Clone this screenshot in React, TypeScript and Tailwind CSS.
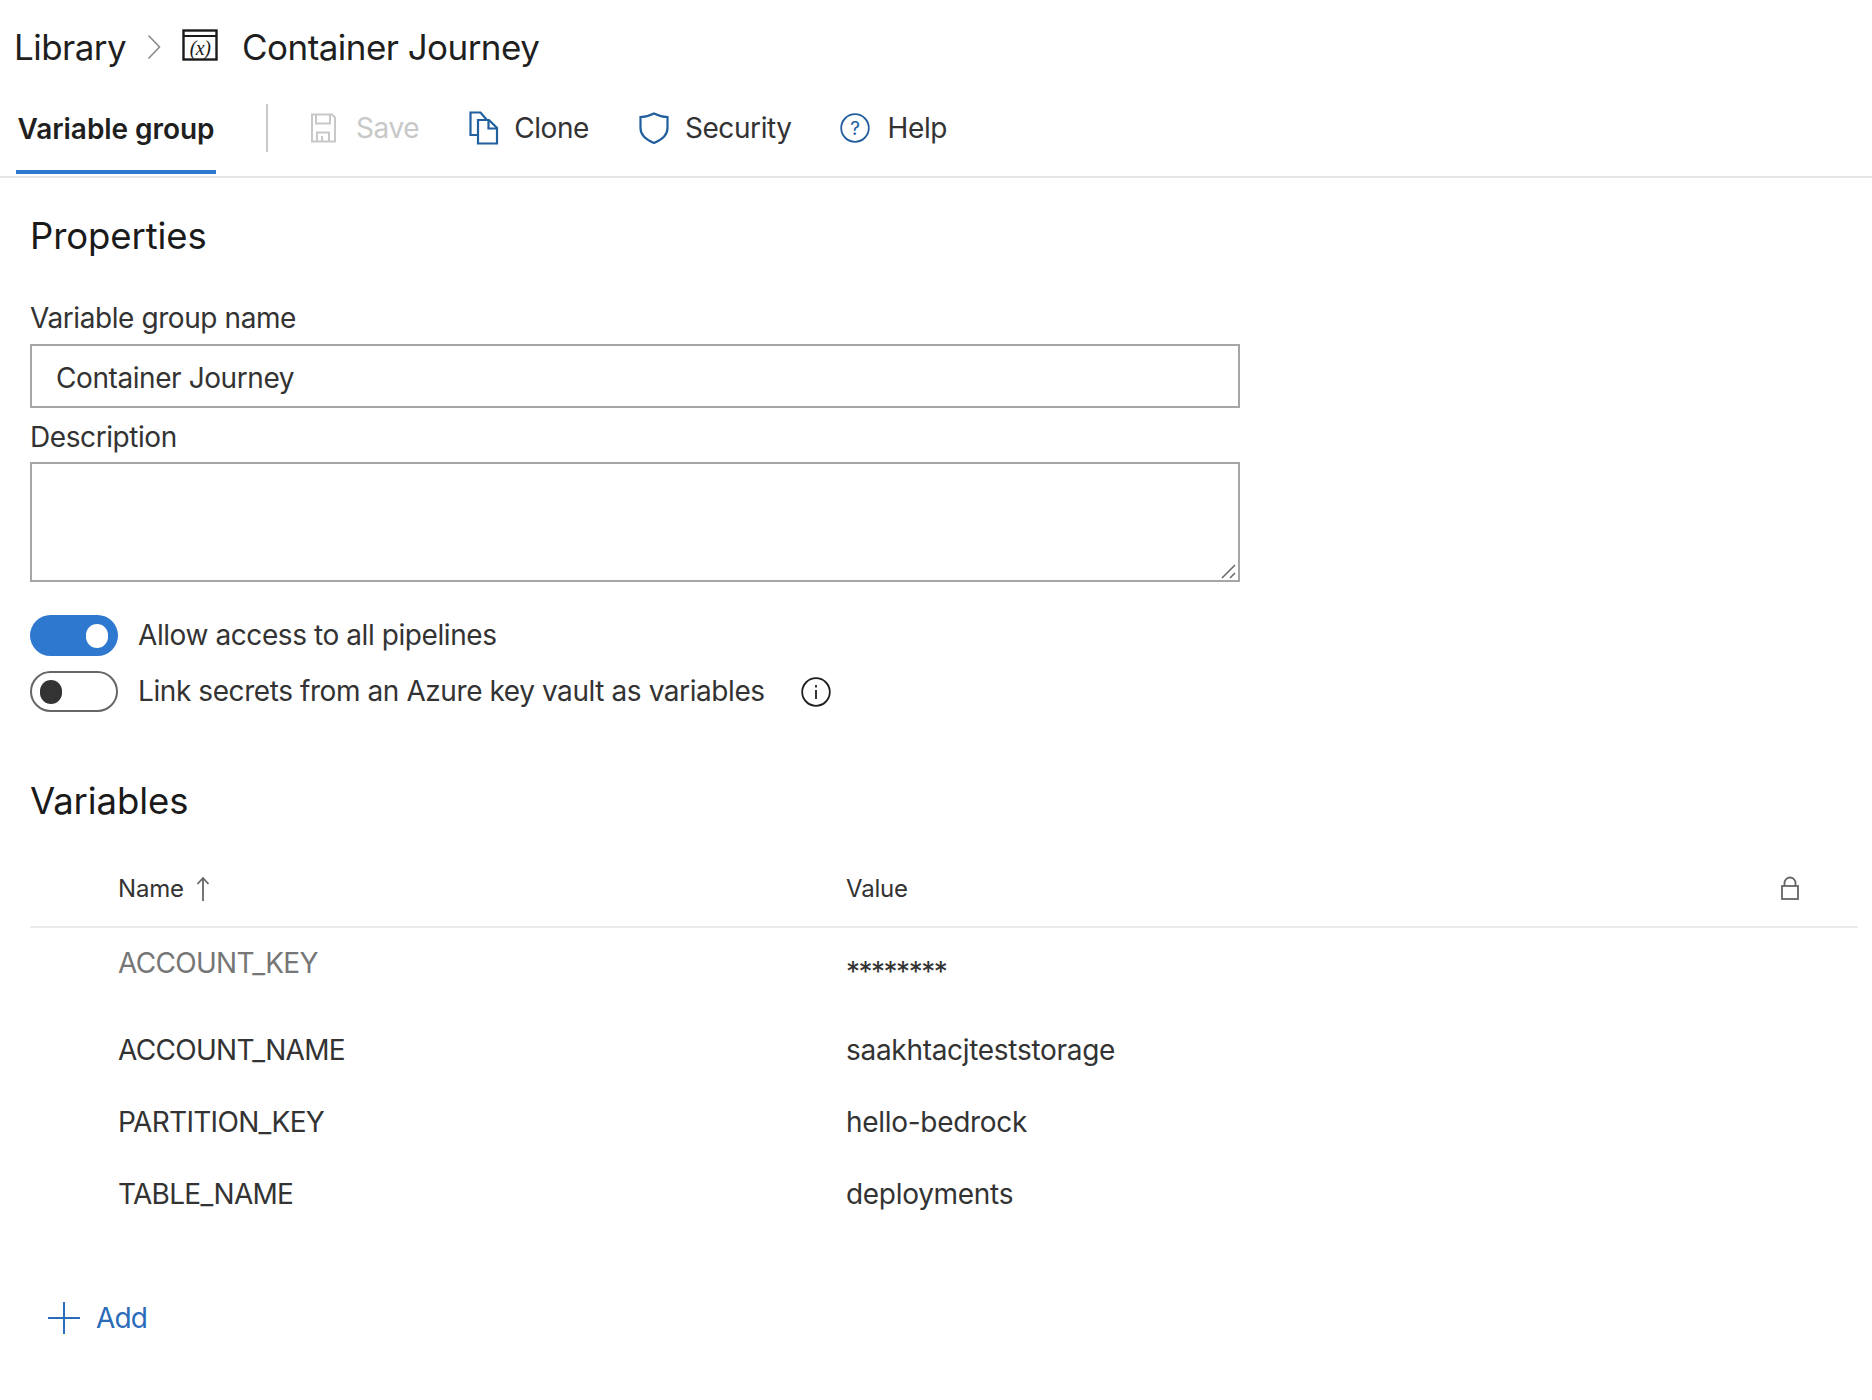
import React from "react";

const Row = ({ name, value, h, muted, stars }: { name: string; value: string; h: string; muted?: boolean; stars?: boolean }) => (
  <div className={`flex items-center ${h}`}>
    <div className={`w-[816px] pl-[88px] tracking-[-0.7px] ${muted ? "text-[#767676] -mt-[2px]" : "text-[#333333]"}`}>{name}</div>
    <div className={`text-[#333333] ${stars ? "pt-[15px] tracking-[-1.5px]" : "tracking-[-0.3px]"}`}>{value}</div>
  </div>
);

export default function App() {
  return (
    <div className="w-[1872px] h-[1400px] bg-white overflow-hidden text-[28px] leading-[36px] tracking-[-0.42px] text-[#333333] font-['Inter','Liberation_Sans',sans-serif]">
      <header className="h-[74px] pl-[14px] pt-[20px] flex items-center text-[35px] leading-[36px] tracking-[-0.55px] text-[#1f1f1f]">
        <span>Library</span>
        <svg className="ml-[21px] w-[14px] h-[26px]" viewBox="0 0 14 26" fill="none" stroke="#8a8a8a" strokeWidth="1.6"><path d="M1.5 1.5 12.5 13 1.5 24.5" /></svg>
        <svg className="ml-[21px] -mt-[4px] w-[36px] h-[32px]" viewBox="0 0 36 32" fill="none">
          <rect x="1.5" y="1.5" width="33" height="29" stroke="#1a1a1a" strokeWidth="2.4" />
          <path d="M1.5 7h33" stroke="#1a1a1a" strokeWidth="2" />
          <text x="18" y="26" textAnchor="middle" fontSize="20" fontStyle="italic" fill="#1a1a1a" fontFamily="'Liberation Serif',serif">(x)</text>
        </svg>
        <span className="ml-[24px]">Container Journey</span>
      </header>

      <nav className="h-[104px] flex border-b-2 border-[#e6e6e6] pl-[16px]">
        <div className="w-[200px] h-[100px] flex items-center justify-center border-b-4 border-[#2f78d0] mb-[-2px] pt-[14px] font-semibold text-[#1f1f1f] text-[28px] tracking-[-0.05px] whitespace-nowrap">Variable group</div>
        <div className="w-[2px] h-[48px] bg-[#c8c8c8] ml-[50px] mt-[30px]" />
        <div className="flex items-center h-[100px] pt-[8px] ml-[42px]">
          <svg className="w-[26px] h-[30px] mr-[20px]" viewBox="0 0 26 30" fill="none" stroke="#c8c8c8" strokeWidth="2">
            <path d="M2 1.5h20l3 3v24H2z" /><path d="M6 1.5v9h14v-9" /><path d="M7 28.5v-9h12v9M12 23v5.5" />
          </svg>
          <span className="text-[#c8c8c8]">Save</span>
        </div>
        <div className="flex items-center h-[100px] pt-[8px] ml-[50px]">
          <svg className="w-[30px] h-[34px] mr-[15px]" viewBox="0 0 30 34" fill="none" stroke="#215f9f" strokeWidth="2.2">
            <path d="M9 24H1.5V1.5h10l6 7" /><path d="M9 9h11l8 8v15.500H9z" /><path d="M19.500 9v8.500H28" />
          </svg>
          <span>Clone</span>
        </div>
        <div className="flex items-center h-[100px] pt-[8px] ml-[50px]">
          <svg className="w-[30px] h-[32px] mr-[16px]" viewBox="0 0 30 32" fill="none" stroke="#215f9f" strokeWidth="2.200">
            <path d="M1.500 5C6 5 10 4 15 1.500 20 4 24 5 28.500 5v11c0 7-6 12-13.500 15C7.500 28 1.500 23 1.500 16z" />
          </svg>
          <span>Security</span>
        </div>
        <div className="flex items-center h-[100px] pt-[8px] ml-[48px]">
          <svg className="w-[30px] h-[30px] mr-[18px]" viewBox="0 0 30 30" fill="none">
            <circle cx="15" cy="15" r="13.800" stroke="#215f9f" strokeWidth="1.800" />
            <text x="15" y="22" textAnchor="middle" fontSize="19" fill="#215f9f" fontFamily="Inter,sans-serif">?</text>
          </svg>
          <span>Help</span>
        </div>
      </nav>

      <main className="pl-[30px]">
        <h2 className="text-[36.5px] leading-[44px] tracking-[-0.1px] text-[#1a1a1a] pt-[36px]">Properties</h2>
        <label className="block mt-[42px] h-[44px] leading-[36px] text-[#333333]">Variable group name</label>
        <div className="w-[1210px] h-[64px] border-2 border-[#a6a6a6] pl-[24px] pt-[3px] flex items-center">Container Journey</div>
        <label className="block mt-[11px] h-[43px] leading-[36px]">Description</label>
        <div className="relative w-[1210px] h-[120px] border-2 border-[#a6a6a6]">
          <svg className="absolute right-[1px] bottom-[1px] w-[16px] h-[16px]" viewBox="0 0 16 16" stroke="#666666" strokeWidth="1.500"><path d="M1 15 14 2M9 15l5-5" /></svg>
        </div>

        <div className="flex items-center mt-[33px] h-[41px]">
          <div className="w-[88px] h-[41px] rounded-full bg-[#2f78d0] flex items-center justify-end pr-[10px]">
            <div className="w-[22px] h-[24px] rounded-full bg-white" />
          </div>
          <span className="ml-[20px] -mt-[1px]">Allow access to all pipelines</span>
        </div>
        <div className="flex items-center mt-[15px] h-[41px]">
          <div className="w-[88px] h-[41px] rounded-full border-2 border-[#666666] flex items-center pl-[8px]">
            <div className="w-[22px] h-[24px] rounded-full bg-[#333333]" />
          </div>
          <span className="ml-[20px] -mt-[1px]">Link secrets from an Azure key vault as variables</span>
          <svg className="ml-[36px] w-[30px] h-[30px]" viewBox="0 0 30 30" fill="none" stroke="#1f1f1f" strokeWidth="1.800">
            <circle cx="15" cy="15" r="13.800" /><path d="M15 13v9" /><path d="M15 8v2.500" />
          </svg>
        </div>

        <h2 className="text-[36.5px] leading-[44px] tracking-[-0.1px] text-[#1a1a1a] mt-[67px]">Variables</h2>

        <div className="w-[1828px] mt-[41px]">
          <div className="h-[64px] flex items-center border-b-2 border-[#ebebeb] text-[24px] tracking-[-0.2px] pb-[12px]">
            <div className="w-[816px] pl-[88px] flex items-center">
              Name
              <svg className="ml-[12px] w-[14px] h-[26px]" viewBox="0 0 14 26" fill="none" stroke="#666666" strokeWidth="1.800"><path d="M7 25V2M1.500 8 7 2l5.500 6" /></svg>
            </div>
            <div className="flex-1">Value</div>
            <svg className="mr-[59px] -mt-[2px] w-[18px] h-[24px]" viewBox="0 0 18 24" fill="none" stroke="#666666" strokeWidth="1.800">
              <rect x="1" y="10" width="16" height="13" /><path d="M3.500 10V7a5.500 5.500 0 0 1 11 0v3" />
            </svg>
          </div>
          <Row name="ACCOUNT_KEY" value="********" h="h-[72px]" muted stars />
          <div className="h-[14px]" />
          <Row name="ACCOUNT_NAME" value="saakhtacjteststorage" h="h-[72px]" />
          <Row name="PARTITION_KEY" value="hello-bedrock" h="h-[72px]" />
          <Row name="TABLE_NAME" value="deployments" h="h-[72px]" />
        </div>

        <div className="flex items-center mt-[70px] ml-[18px] text-[#2b6cb8]">
          <svg className="w-[32px] h-[32px]" viewBox="0 0 32 32" stroke="#2b6cb8" strokeWidth="2"><path d="M16 0v32M0 16h32" /></svg>
          <span className="ml-[16px] tracking-[-0.9px]">Add</span>
        </div>
      </main>
    </div>
  );
}
